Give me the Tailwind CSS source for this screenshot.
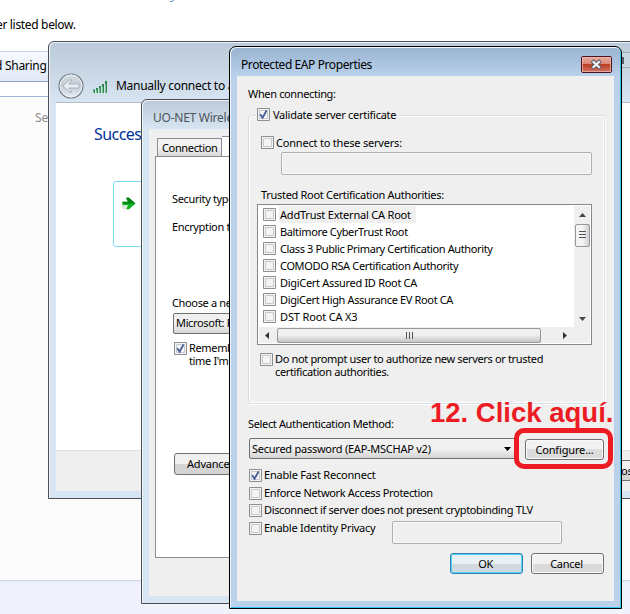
<!DOCTYPE html>
<html lang="en">
<head>
<meta charset="utf-8">
<title>Protected EAP Properties</title>
<script src="https://cdn.jsdelivr.net/npm/@tailwindcss/browser@4"></script>
</head>
<body class="relative h-[614px] w-[630px] overflow-hidden bg-white font-['Noto_Sans',sans-serif] text-[11px] leading-[13px] tracking-[-0.35px] whitespace-nowrap text-black">
<svg class="hidden">
  <defs>
    <linearGradient id="box" x1="0" y1="0" x2="1" y2="1"><stop offset="0" stop-color="#c3c8d0"/><stop offset="1" stop-color="#f6f6f6"/></linearGradient>
    <symbol id="off" viewBox="0 0 13 13"><path d="M.5.5h12v12H.5z" fill="#f4f4f4" stroke="#8e8f8f"/><path d="M2.5 2.5h8v8h-8z" fill="url(#box)" stroke="#c5cad0"/></symbol>
    <symbol id="on" viewBox="0 0 13 13"><path d="M.5.5h12v12H.5z" fill="#f4f4f4" stroke="#8e8f8f"/><path d="M2.5 2.5h8v8h-8z" fill="url(#box)" stroke="#c5cad0"/><path d="M3.2 6.2 5.6 9.6 9.6 2.4" fill="none" stroke="#4a5f97" stroke-width="1.9"/></symbol>
  </defs>
</svg>

<!-- Control panel page -->
<main class="flex h-full flex-col">
  <div class="relative h-[51px] pt-[17px] text-[12px] leading-4"><span class="-ml-[4px] tracking-[-0.33px]">er listed below.</span>
    <svg class="absolute top-0 left-[169px]" width="6" height="3"><path d="M4.5 0C4 1.5 3 1.5 1 1.5" fill="none" stroke="#4f7fc4"/></svg>
  </div>
  <div class="h-[31px] border-t border-b border-t-[#c9d3e4] border-b-[#8e9fc0] bg-linear-to-b from-[#f7faff] to-[#dfe8f5] pt-[6px] text-[12px] leading-4"><span class="-ml-[5px] tracking-[-0.28px]">d Sharing</span></div>
  <div class="h-[15px] border-b border-[#a0b4d8] bg-white"></div>
  <div class="h-[484px] border-b border-[#ccd6e6] bg-[#fcfcfc] pt-[13px] pl-[35px] text-[12px] leading-4 tracking-[-0.1px] text-[#8c8c8c]">Se</div>
  <div class="flex-1 bg-linear-to-b from-[#e4ebf6] to-[#f0f3fc] to-10%"></div>
</main>

<!-- Wireless connection wizard -->
<section class="absolute top-[41px] left-[48px] flex h-[458px] w-[600px] flex-col rounded-t-[6px] border border-[#4b4f55] bg-[#d7e4f1] p-[7px] pt-0 shadow-[inset_1px_1px_0_#eef4fa]">
  <header class="-mx-[6px] mt-px flex h-[59px] shrink-0 items-end rounded-t-[5px] bg-linear-to-b from-[#bccbd9] to-[#d7e4f1] pb-[3px] pl-[7px]">
    <svg width="28" height="28" viewBox="0 0 28 28" class="-mb-[1px]">
      <defs><linearGradient id="orb" x1="0" y1="0" x2="0" y2="1"><stop offset="0" stop-color="#d6dde4"/><stop offset=".5" stop-color="#c2ccd6"/><stop offset="1" stop-color="#e6edf4"/></linearGradient></defs>
      <circle cx="14" cy="14" r="12" fill="url(#orb)" stroke="#747e88" stroke-width="1.2"/><circle cx="14" cy="14" r="10.9" fill="none" stroke="#eef2f6"/>
      <path d="M6 14l6-6h3l-3.5 4H22v4H11.500l3.500 4h-3z" fill="#e9edf1" stroke="#a3aeba" stroke-width=".9"/>
    </svg>
    <svg width="16" height="14" viewBox="0 0 16 14" class="mb-[5px] ml-[7px]"><path d="M1 9.500h2V13H1zM4 8h2v5H4zM7 6h2v7H7zM10 4h2v9h-2zM13 1h2v12h-2z" fill="#2c8650"/><path d="M1 10.500h1V13H1zM4 10h1v3H4zM7 8h1v5H7zM10 7h1v6h-1zM13 4h1v9h-1z" fill="#7cc492"/></svg>
    <span class="mb-[5px] ml-[8px] text-[12px] leading-4 tracking-[-0.27px]">Manually connect to a wireless network</span>
  </header>
  <div class="flex min-h-0 flex-1 flex-col border-t border-[#b4bcc6] bg-white">
    <h1 class="pt-[20px] pl-[38px] text-[16px] leading-[22px] tracking-[-0.55px] text-[#003399]">Successfully added</h1>
    <div class="mt-[36px] ml-[57px] h-[66px] w-[400px] rounded-[3px] border border-[#7adaf9] pt-[13px] pl-[7px]">
      <svg width="17" height="18" viewBox="0 0 17 18"><ellipse cx="6" cy="11" rx="6" ry="4" fill="#e3e3e3"/><path d="M1.500 6.800H7L5 2.800H8L14.500 8.500L8 14.200H5L7 10.200H1.500z" fill="#0db522" stroke="#fff" stroke-width="1.500" paint-order="stroke"/><path d="M1.500 6.800H7L5 2.800H8L14.500 8.500H1.500z" fill="#098213"/></svg>
    </div>
    <footer class="mt-auto flex h-[41px] shrink-0 border-t border-[#dfdfdf] bg-[#efefef] pt-[9px] pl-[520px]"><div class="h-[21px] w-[75px] rounded-[3px] border border-[#707070] bg-linear-to-b from-[#f2f2f2] from-50% to-[#d2d2d2] to-50% pt-[3px] pl-[35px]">Close</div></footer>
  </div>
  <div class="absolute top-[10px] left-[565px] h-[16px] w-[30px] border border-[#a0acb9] bg-[#cbd7e3] pt-[4px] pl-[6px]"><div class="h-[7px] w-[3px] bg-[#5b6270]"></div></div>
</section>

<!-- Wireless network properties -->
<section class="absolute top-[99px] left-[141px] flex h-[505px] w-[380px] flex-col rounded-t-[6px] border border-[#4b4f55] bg-[#d7e4f1] p-[7px] pt-0 shadow-[inset_1px_1px_0_#eef4fa]">
  <header class="-mx-[6px] mt-px h-[28px] shrink-0 rounded-t-[5px] bg-linear-to-b from-[#bccbd9] to-[#d7e4f1] pt-[9px] pl-[10px] text-[12px] leading-4 tracking-[-0.25px] text-[#4c545c]">UO-NET Wireless</header>
  <div class="flex min-h-0 flex-1 flex-col bg-[#efefef] pt-[7px] pb-[38px] pl-[6px]">
    <div class="flex h-[20px] items-end pl-[2px]">
      <div class="h-[18px] w-[65px] border border-b-0 border-[#8a8c96] bg-linear-to-b from-[#f2f2f2] from-50% to-[#d8d8d8] to-100% pt-[2px] pl-[4px]">Connection</div>
      <div class="h-[20px] flex-1 border-t border-[#8a8c96] bg-white"></div>
    </div>
    <div class="flex-1 border border-[#8a8c96] bg-white pt-[35px] pl-[16px]">
      <p>Security type:</p>
      <p class="mt-[15px]">Encryption type:</p>
      <p class="mt-[63px]">Choose a network authentication method:</p>
      <div class="mt-[4px] ml-px h-[21px] w-[200px] rounded-[2px] border border-[#707070] bg-linear-to-b from-[#f0f0f0] from-50% to-[#d5d5d5] to-100% pt-[2px] pl-[2px]">Microsoft: Protected EAP</div>
      <div class="mt-[8px] ml-[2px] flex gap-[2px]"><svg width="13" height="13"><use href="#on"/></svg><p class="-mt-px">Remember my credentials<br>time I'm logged on</p></div>
      <div class="mt-[86px] ml-[2px] h-[22px] w-[120px] rounded-[3px] border border-[#707070] bg-linear-to-b from-[#f0f0f0] from-50% to-[#d4d4d4] to-50% pt-[3px] pl-[12px] tracking-[-0.2px]">Advanced settings</div>
    </div>
  </div>
</section>

<!-- Protected EAP dialog -->
<section class="absolute top-[46px] left-[229px] flex h-[563px] w-[393px] flex-col rounded-t-[7px] border border-black bg-[#b9d1ea] px-[7px] pb-[7px] shadow-[inset_1px_1px_0_#f2f7fc,inset_-1px_-1px_0_#33c4ec]">
  <header class="-mx-[6px] mt-px flex h-[28px] shrink-0 rounded-t-[6px] bg-linear-to-b from-[#9ab4d1] to-[#b9d1ea] pl-[10px]">
    <h2 class="mt-[9px] text-[12px] leading-4 tracking-[-0.41px]">Protected EAP Properties</h2>
    <svg class="mt-[8px] mr-[8px] ml-auto" width="31" height="17" viewBox="0 0 31 17"><defs><linearGradient id="red" x1="0" y1="0" x2="0" y2="1"><stop offset="0" stop-color="#e9aea3"/><stop offset=".45" stop-color="#dc8878"/><stop offset=".47" stop-color="#b9391f"/><stop offset="1" stop-color="#d5796a"/></linearGradient></defs><rect x=".5" y=".5" width="30" height="16" rx="1.500" fill="url(#red)" stroke="#4b1420"/><rect x="1.500" y="1.500" width="28" height="14" fill="none" stroke="#eeb8ad" stroke-opacity=".75"/><path d="M12.500 6l5.500 5M18 6l-5.500 5" stroke="#535666" stroke-width="4" stroke-linecap="square"/><path d="M12.500 6l5.500 5M18 6l-5.500 5" stroke="#f4f4f4" stroke-width="2.200" stroke-linecap="square"/></svg>
  </header>
  <div class="flex min-h-0 flex-1 flex-col bg-[#efefef] pt-[11px] pr-[10px] pl-[11px]">
    <p>When connecting:</p>
    <div class="mt-[15px] h-[289px] w-[357px] rounded-[3px] border border-[#d5dfe5] shadow-[inset_1px_1px_0_#fff,inset_-1px_-1px_0_#fff,1px_1px_0_#fff]">
      <div class="-mt-[8px] ml-[7px] flex w-[143px] items-center gap-[2px] bg-[#efefef] pl-[1px]"><svg width="13" height="13"><use href="#on"/></svg><span class="pl-px tracking-[-0.27px]">Validate server certificate</span></div>
      <div class="mt-[15px] ml-[12px] flex gap-[2px]"><svg width="13" height="13"><use href="#off"/></svg><span class="tracking-[-0.2px]">Connect to these servers:</span></div>
      <div class="mt-[3px] ml-[32px] h-[23px] w-[311px] rounded-[2px] border border-[#afafaf] shadow-[inset_0_0_0_1px_#fafafa]"></div>
      <p class="mt-[13px] ml-[12px] tracking-[-0.3px]">Trusted Root Certification Authorities:</p>
      <div class="mt-[3px] ml-[8px] flex h-[141px] w-[335px] flex-col border border-[#828790] bg-white p-px">
        <div class="flex h-[121px]">
          <ul class="flex-1 pl-[4px]">
            <li class="flex h-[17px] items-center gap-[3px]"><svg width="13" height="13"><use href="#off"/></svg><span class="h-[17px] w-[137px] bg-[#efefef] pt-[2px] pl-px tracking-[-0.2px]">AddTrust External CA Root</span></li>
            <li class="flex h-[17px] items-center gap-[4px]"><svg width="13" height="13"><use href="#off"/></svg><span>Baltimore CyberTrust Root</span></li>
            <li class="flex h-[17px] items-center gap-[4px]"><svg width="13" height="13"><use href="#off"/></svg><span class="tracking-[-0.38px]">Class 3 Public Primary Certification Authority</span></li>
            <li class="flex h-[17px] items-center gap-[4px]"><svg width="13" height="13"><use href="#off"/></svg><span>COMODO RSA Certification Authority</span></li>
            <li class="flex h-[17px] items-center gap-[4px]"><svg width="13" height="13"><use href="#off"/></svg><span class="tracking-[-0.3px]">DigiCert Assured ID Root CA</span></li>
            <li class="flex h-[17px] items-center gap-[4px]"><svg width="13" height="13"><use href="#off"/></svg><span>DigiCert High Assurance EV Root CA</span></li>
            <li class="flex h-[17px] items-center gap-[4px]"><svg width="13" height="13"><use href="#off"/></svg><span class="tracking-[-0.15px]">DST Root CA X3</span></li>
          </ul>
          <div class="flex w-[16px] flex-col items-center bg-[#efefef]">
            <svg width="7" height="4" class="mt-[7px]"><path d="M0 4 3.500 0 7 4z" fill="#444"/></svg>
            <div class="mt-[7px] flex h-[23px] w-[15px] flex-col items-center gap-px rounded-[2px] border border-[#979797] bg-linear-to-r from-[#f4f4f4] from-50% to-[#cfcfd2] to-100% pt-[6px]"><i class="h-[2px] w-[7px] border-t border-[#555]"></i><i class="h-[2px] w-[7px] border-t border-[#555]"></i><i class="h-[2px] w-[7px] border-t border-[#555]"></i></div>
            <svg width="7" height="4" class="mt-auto mb-[6px]"><path d="M0 0H7L3.500 4z" fill="#444"/></svg>
          </div>
        </div>
        <div class="flex flex-1 bg-[#efefef]">
          <div class="flex w-[315px] items-center">
            <svg width="4" height="7" class="ml-[6px]"><path d="M4 0 0 3.500 4 7z" fill="#333"/></svg>
            <div class="ml-[8px] flex h-[15px] w-[264px] items-center justify-center gap-[2px] rounded-[2px] border border-[#979797] bg-linear-to-b from-[#f0f0f0] from-45% to-[#c6c6ca] to-100%"><i class="h-[7px] w-px bg-[#555]"></i><i class="h-[7px] w-px bg-[#555]"></i><i class="h-[7px] w-px bg-[#555]"></i></div>
            <svg width="4" height="7" class="ml-[22px]"><path d="M0 0 4 3.500 0 7z" fill="#333"/></svg>
          </div>
        </div>
      </div>
      <div class="mt-[8px] ml-[11px] flex gap-[2px]"><svg width="13" height="13"><use href="#off"/></svg><p class="-mt-px">Do not prompt user to authorize new servers or trusted<br>certification authorities.</p></div>
    </div>
    <p class="mt-[13px]">Select Authentication Method:</p>
    <div class="mt-[8px] ml-[1px] flex">
      <div class="flex h-[21px] w-[269px] shrink-0 justify-between rounded-[2px] border border-[#707070] bg-linear-to-b from-[#f1f1f1] from-50% to-[#d4d4d4] to-100% pt-[3px] pr-[6px] pl-[2px]"><span class="tracking-[-0.25px]">Secured password (EAP-MSCHAP v2)</span><svg width="7" height="4" class="mt-[5px]"><path d="M0 0H7L3.500 4z"/></svg></div>
      <div class="mt-px ml-[7px] h-[21px] w-[79px] shrink-0 rounded-[3px] border border-[#707070] bg-linear-to-b from-[#f2f2f2] from-50% to-[#dcdcdc] to-50% pt-[3px] text-center tracking-[-0.15px] shadow-[inset_0_0_0_1px_#fafafa]">Configure...</div>
    </div>
    <div class="mt-[9px] ml-[1px] flex gap-[2px]"><svg width="13" height="13"><use href="#on"/></svg><span class="leading-[11px] tracking-[-0.2px]">Enable Fast Reconnect</span></div>
    <div class="mt-[5px] ml-[1px] flex gap-[2px]"><svg width="13" height="13"><use href="#off"/></svg><span class="leading-[11px] tracking-[-0.33px]">Enforce Network Access Protection</span></div>
    <div class="mt-[4px] ml-[1px] flex gap-[2px]"><svg width="13" height="13"><use href="#off"/></svg><span class="leading-[11px] tracking-[-0.36px]">Disconnect if server does not present cryptobinding TLV</span></div>
    <div class="mt-[4px] ml-[1px] flex h-[23px]"><svg width="13" height="13" class="mt-px"><use href="#off"/></svg><span class="ml-[2px] w-[128px] tracking-[-0.25px]">Enable Identity Privacy</span><div class="h-[23px] w-[170px] rounded-[2px] border border-[#afafaf] shadow-[inset_0_0_0_1px_#fafafa]"></div></div>
    <div class="mt-[9px] flex justify-end gap-[8px]">
      <div class="h-[21px] w-[73px] rounded-[3px] border border-[#3c7fb1] bg-linear-to-b from-[#eaf0f3] from-50% to-[#d0dade] to-50% pt-[3px] pr-[2px] text-center shadow-[inset_0_0_0_1px_#48d2f5]">OK</div>
      <div class="h-[21px] w-[73px] rounded-[3px] border border-[#707070] bg-linear-to-b from-[#f2f2f2] from-50% to-[#dadada] to-50% pt-[3px] pr-[2px] text-center tracking-[-0.25px] shadow-[inset_0_0_0_1px_#fafafa]">Cancel</div>
    </div>
  </div>
</section>

<!-- Step annotation -->
<div class="absolute top-[428px] left-[514px] h-[41px] w-[99px] rounded-[10px] border-[5px] border-[#ed1c24]"></div>
<p class="absolute top-[397px] left-[430px] font-['Liberation_Sans',sans-serif] text-[27.5px] leading-[32px] font-bold tracking-normal text-[#ed1c24]">12. Click aquí.</p>
</body>
</html>
